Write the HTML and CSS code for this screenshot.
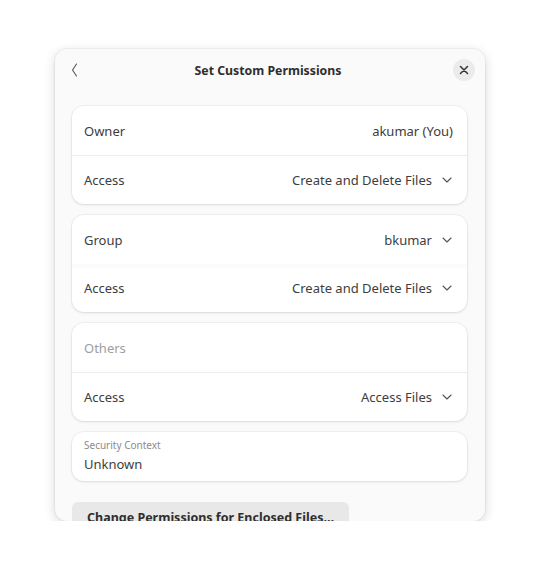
FILE: index.html
```html
<!DOCTYPE html>
<html>
<head>
<meta charset="utf-8">
<link rel="stylesheet" href="styles.css">
</head>
<body>
<div class="dialog">
  <div class="header">
    <button class="back" aria-label="Back">
      <svg width="10" height="16" viewBox="0 0 10 16"><path d="M6.5 2 L2.5 8 L6.5 14" fill="none" stroke="#555" stroke-width="1.1" stroke-linecap="round" stroke-linejoin="round"/></svg>
    </button>
    <div class="title">Set Custom Permissions</div>
    <button class="close" aria-label="Close">
      <svg width="10" height="10" viewBox="0 0 10 10"><path d="M1.5 1.5 L8.5 8.5 M8.5 1.5 L1.5 8.5" fill="none" stroke="#333" stroke-width="1.5" stroke-linecap="round"/></svg>
    </button>
  </div>
  <div class="content">
    <div class="card">
      <div class="row"><span class="label">Owner</span><span class="value">akumar (You)</span></div>
      <div class="row"><span class="label">Access</span><span class="value">Create and Delete Files<svg class="chev" width="10" height="6" viewBox="0 0 10 6"><path d="M1 1 L5 5 L9 1" fill="none" stroke="#555" stroke-width="1.1" stroke-linecap="round" stroke-linejoin="round"/></svg></span></div>
    </div>
    <div class="card">
      <div class="row row-soft"><span class="label">Group</span><span class="value">bkumar<svg class="chev" width="10" height="6" viewBox="0 0 10 6"><path d="M1 1 L5 5 L9 1" fill="none" stroke="#555" stroke-width="1.1" stroke-linecap="round" stroke-linejoin="round"/></svg></span></div>
      <div class="row"><span class="label">Access</span><span class="value">Create and Delete Files<svg class="chev" width="10" height="6" viewBox="0 0 10 6"><path d="M1 1 L5 5 L9 1" fill="none" stroke="#555" stroke-width="1.1" stroke-linecap="round" stroke-linejoin="round"/></svg></span></div>
    </div>
    <div class="card">
      <div class="row"><span class="label dim">Others</span></div>
      <div class="row"><span class="label">Access</span><span class="value">Access Files<svg class="chev" width="10" height="6" viewBox="0 0 10 6"><path d="M1 1 L5 5 L9 1" fill="none" stroke="#555" stroke-width="1.1" stroke-linecap="round" stroke-linejoin="round"/></svg></span></div>
    </div>
    <div class="card">
      <div class="prop">
        <span class="prop-label">Security Context</span>
        <span class="prop-value">Unknown</span>
      </div>
    </div>
    <button class="wide-btn">Change Permissions for Enclosed Files…</button>
  </div>
</div>
</body>
</html>
```

FILE: styles.css
```css
html, body {
  margin: 0;
  padding: 0;
  background: #ffffff;
}
body {
  font-family: "Noto Sans", "Open Sans", sans-serif;
  color: #3d3d3d;
  padding: 49px 0 0 55px;
}
.dialog {
  width: 430px;
  height: 472px;
  background: #fafafa;
  border-radius: 12px;
  overflow: hidden;
  box-shadow: 0 0 0 1px rgba(0,0,0,0.04), 0 3px 12px rgba(0,0,0,0.16);
  display: flex;
  flex-direction: column;
}
.header {
  height: 42px;
  display: flex;
  align-items: center;
  justify-content: space-between;
  padding: 0 10px 0 12px;
  flex: none;
}
.back, .close {
  border: 0;
  padding: 0;
  background: transparent;
  display: flex;
  align-items: center;
  justify-content: center;
}
.back {
  width: 16px;
  height: 22px;
}
.close {
  width: 22px;
  height: 22px;
  border-radius: 50%;
  background: #ebebeb;
}
.title {
  font-weight: 700;
  font-size: 12.3px;
  color: #2e2e2e;
}
.content {
  padding: 15px 18px 0 17px;
  display: flex;
  flex-direction: column;
  align-items: flex-start;
}
.card {
  align-self: stretch;
  background: #ffffff;
  border-radius: 12px;
  box-shadow: 0 0 0 1px rgba(0,0,0,0.035), 0 1px 3px rgba(0,0,0,0.1);
  margin-bottom: 11px;
  overflow: hidden;
}
.row {
  height: 49px;
  display: flex;
  align-items: center;
  justify-content: space-between;
  padding: 0 14px 0 12px;
  font-size: 13px;
}
.row + .row {
  border-top: 1px solid #ececec;
  height: 48px;
}
.row-soft + .row {
  border-top: 0;
  box-shadow: inset 0 4px 0 #fbfbfb;
}
.label.dim {
  color: #9e9e9e;
}
.value {
  display: flex;
  align-items: center;
}
.chev {
  margin-left: 10px;
  margin-right: 1px;
}
.prop {
  height: 49px;
  box-sizing: border-box;
  display: flex;
  flex-direction: column;
  padding: 6px 12px 0;
}
.prop-label {
  font-size: 10px;
  color: #8c8c8c;
  line-height: 14px;
  margin-bottom: 3px;
}
.prop-value {
  font-size: 13px;
  line-height: 18px;
}
.wide-btn {
  margin-top: 10px;
  height: 30px;
  padding: 0 15px;
  border: 0;
  border-radius: 6px;
  background: #e8e8e8;
  font-family: "Noto Sans", "Open Sans", sans-serif;
  font-weight: 700;
  font-size: 12.5px;
  color: #2e2e2e;
  display: flex;
  align-items: center;
}
```
